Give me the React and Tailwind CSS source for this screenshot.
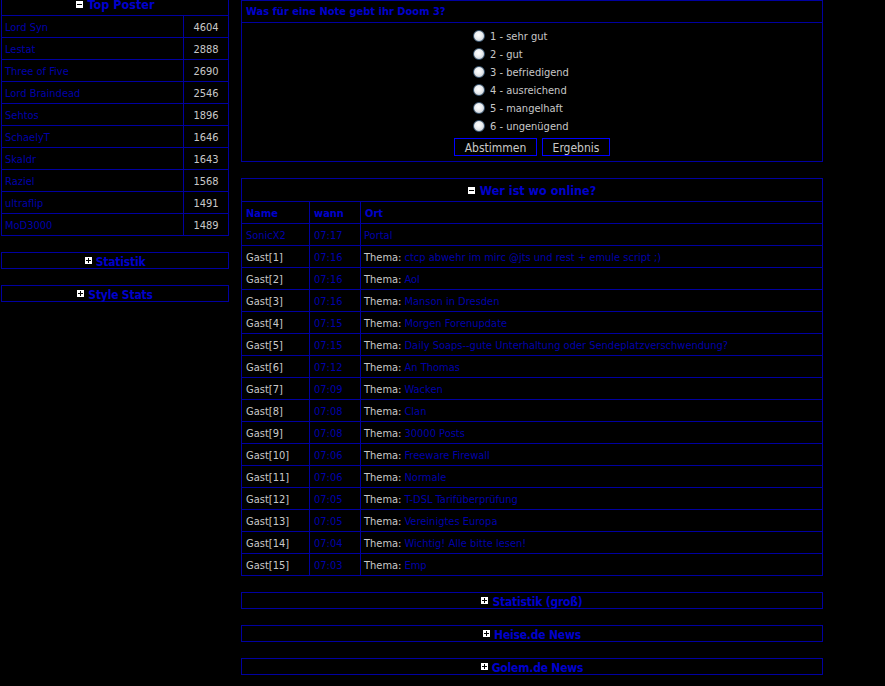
import React from "react";

const posters = [
  ["Lord Syn", 4604],
  ["Lestat", 2888],
  ["Three of Five", 2690],
  ["Lord Braindead", 2546],
  ["Sehtos", 1896],
  ["SchaelyT", 1646],
  ["Skaldr", 1643],
  ["Raziel", 1568],
  ["ultraflip", 1491],
  ["MoD3000", 1489],
];

const online = [
  ["SonicX2", "07:17", null, "Portal", true],
  ["Gast[1]", "07:16", "Thema:", "ctcp abwehr im mirc @jts und rest + emule script ;)"],
  ["Gast[2]", "07:16", "Thema:", "Aol"],
  ["Gast[3]", "07:16", "Thema:", "Manson in Dresden"],
  ["Gast[4]", "07:15", "Thema:", "Morgen Forenupdate"],
  ["Gast[5]", "07:15", "Thema:", "Daily Soaps--gute Unterhaltung oder Sendeplatzverschwendung?"],
  ["Gast[6]", "07:12", "Thema:", "An Thomas"],
  ["Gast[7]", "07:09", "Thema:", "Wacken"],
  ["Gast[8]", "07:08", "Thema:", "Clan"],
  ["Gast[9]", "07:08", "Thema:", "30000 Posts"],
  ["Gast[10]", "07:06", "Thema:", "Freeware Firewall"],
  ["Gast[11]", "07:06", "Thema:", "Normale"],
  ["Gast[12]", "07:05", "Thema:", "T-DSL Tarifüberprüfung"],
  ["Gast[13]", "07:05", "Thema:", "Vereinigtes Europa"],
  ["Gast[14]", "07:04", "Thema:", "Wichtig! Alle bitte lesen!"],
  ["Gast[15]", "07:03", "Thema:", "Emp"],
];

const grades = ["1 - sehr gut", "2 - gut", "3 - befriedigend", "4 - ausreichend", "5 - mangelhaft", "6 - ungenügend"];

function Toggle({ open }) {
  return (
    <svg width="7" height="7" viewBox="0 0 7 7" shapeRendering="crispEdges" className="shrink-0">
      <rect width="7" height="7" fill="#ffffff" />
      <path d="M1 3h5v1H1z" fill="#000" />
      {!open && <path d="M3 1h1v5H3z" fill="#000" />}
    </svg>
  );
}

function Collapsed({ title }) {
  return (
    <div className="border border-[#0000a0] h-[17px] flex items-center justify-center gap-[4px]">
      <Toggle />
      <span className="text-[12px] font-bold text-[#0000cc] leading-none tracking-[-0.2px] relative top-[1px]">{title}</span>
    </div>
  );
}

function Radio() {
  return (
    <span className="w-[12px] h-[12px] rounded-full border border-[#3a5670] bg-[radial-gradient(circle_at_45%_40%,#ffffff_0%,#eef0f2_40%,#b9c2cc_100%)] shrink-0" />
  );
}

export default function App() {
  return (
    <div className="bg-black min-h-[686px] w-[885px] overflow-hidden font-['DejaVu_Sans_Condensed','DejaVu_Sans',sans-serif] [font-stretch:condensed] text-[11px] text-[#c8c8c8]">
      <div className="flex pl-[1px] gap-[12px] items-start">
        {/* left column */}
        <div className="w-[228px] flex flex-col gap-[16px] -mt-[7px]">
          <div className="border border-[#0000a0]">
            <div className="h-[21px] flex items-center justify-center gap-[5px]">
              <Toggle open />
              <span className="text-[12.5px] font-bold text-[#0000cc] leading-none relative top-[1px]">Top Poster</span>
            </div>
            {posters.map(([name, n]) => (
              <div key={name} className="grid grid-cols-[181px_1fr] h-[22px] border-t border-[#0000a0]">
                <div className="flex items-center pl-[3px] pt-[4px] text-[#0000aa]">{name}</div>
                <div className="flex items-center justify-center pt-[4px] border-l border-[#0000a0]">{n}</div>
              </div>
            ))}
          </div>
          <Collapsed title="Statistik" />
          <Collapsed title="Style Stats" />
        </div>

        {/* right column */}
        <div className="w-[582px] flex flex-col gap-[16px]">
          <div className="border border-[#0000a0]">
            <div className="h-[22px] flex items-center pl-[4px] pt-[2px] border-b border-[#0000a0]">
              <span className="font-bold text-[#0000cc] text-[11px]">Was für eine Note gebt ihr Doom 3?</span>
            </div>
            <div className="pt-[4px] pb-[5px] h-[138px] flex flex-col">
              <div className="ml-[231px] flex flex-col">
                {grades.map((g) => (
                  <div key={g} className="h-[18px] flex items-center gap-[5px]">
                    <Radio />
                    <span className="relative top-[1px]">{g}</span>
                  </div>
                ))}
              </div>
              <div className="mt-[3px] flex justify-center gap-[5px]">
                <button className="w-[83px] h-[18px] pt-[2px] border border-[#0000ff] bg-black text-[12px] text-[#c8c8c8] leading-none">Abstimmen</button>
                <button className="w-[68px] h-[18px] pt-[2px] border border-[#0000ff] bg-black text-[12px] text-[#c8c8c8] leading-none">Ergebnis</button>
              </div>
            </div>
          </div>

          <div className="border border-[#0000a0]">
            <div className="h-[22px] flex items-center justify-center gap-[5px]">
              <Toggle open />
              <span className="text-[12.5px] font-bold text-[#0000cc] leading-none relative top-[1px]">Wer ist wo online?</span>
            </div>
            <div className="grid grid-cols-[67px_51px_1fr] h-[22px] border-t border-[#0000a0] font-bold text-[#0000cc]">
              <div className="flex items-center pl-[4px] pt-[4px]">Name</div>
              <div className="flex items-center pl-[4px] pt-[4px] border-l border-[#0000a0]">wann</div>
              <div className="flex items-center pl-[4px] pt-[4px] border-l border-[#0000a0]">Ort</div>
            </div>
            {online.map(([name, time, label, topic, member]) => (
              <div key={name} className="grid grid-cols-[67px_51px_1fr] h-[22px] border-t border-[#0000a0]">
                <div className={`flex items-center pl-[4px] pt-[4px] ${member ? "text-[#0000aa]" : ""}`}>{name}</div>
                <div className="flex items-center pl-[4px] pt-[4px] border-l border-[#0000a0] text-[#0000aa]">{time}</div>
                <div className="flex items-center pl-[3px] pt-[4px] border-l border-[#0000a0] whitespace-nowrap">
                  {label && <span className="mr-[3px]">{label}</span>}
                  <span className="text-[#0000aa]">{topic}</span>
                </div>
              </div>
            ))}
          </div>

          <Collapsed title="Statistik (groß)" />
          <Collapsed title="Heise.de News" />
          <Collapsed title="Golem.de News" />
        </div>
      </div>
    </div>
  );
}
